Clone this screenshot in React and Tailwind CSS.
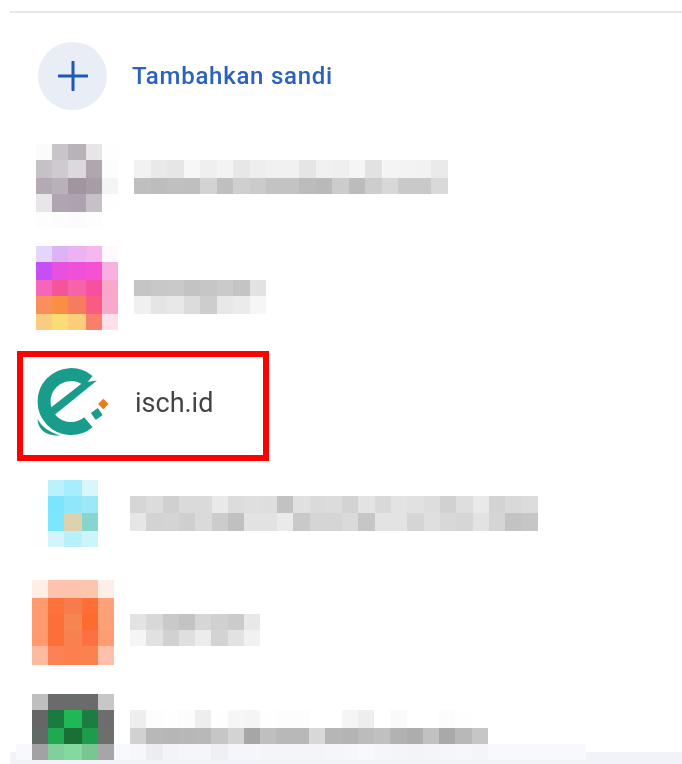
import React from "react";

// blurred-out avatars and labels, one colour per cell
const avatarXs = [0, 16, 32, 50, 66, 82];

const hex = (c) => (c.length === 2 ? `#${c}${c}${c}` : `#${c}`);

function Mosaic({ xs, ys, rows }) {
  const width = xs[xs.length - 1];
  const height = ys[ys.length - 1];
  return (
    <svg width={width} height={height} viewBox={`0 0 ${width} ${height}`} shapeRendering="crispEdges" className="block shrink-0">
      {rows.map((row, r) =>
        row.split(" ").map((c, i) => (
          <rect key={`${r}-${i}`} x={xs[i]} y={ys[r]} width={xs[i + 1] - xs[i]} height={ys[r + 1] - ys[r]} fill={hex(c)} />
        ))
      )}
    </svg>
  );
}

function cellEdges(count, width) {
  return Array.from({ length: count + 1 }, (_, i) => Math.round((i * width) / count));
}

const items = [
  {
    wrap: "mt-[34px] pl-[36px]",
    gap: "gap-[16px]",
    textTop: "mt-[16px]",
    avatarYs: [0, 16, 34, 50, 68, 84],
    avatar: [
      "fbfbfb c9c4c9 b9b2b9 e7e5e7 fefefe",
      "c6c0c7 cfcad0 dcd9de afa6af fcfcfc",
      "b3aab3 b9b1b9 a195a2 a79da6 f4f4f4",
      "e8e6e8 aea5b0 aca3ae c6c1c7 fefefe",
      "fdfdfd fcfcfc fbfbfb fdfdfd ffffff",
    ],
    textWidth: 314,
    textYs: [0, 18, 34],
    text: [
      "f2 e9 e6 f7 ef f3 e7 ee f1 f1 e5 f1 ef f5 e2 f4 f3 f2 ea",
      "bf bd c0 bf d3 bf cf cb c3 c3 bc b9 cc bc cd d8 c9 c9 d9",
    ],
  },
  {
    wrap: "mt-[18px] pl-[36px]",
    gap: "gap-[16px]",
    textTop: "mt-[34px]",
    avatarYs: [0, 16, 34, 50, 68, 84],
    avatar: [
      "e5d5fa dcb3f7 ecb2f3 f6b6f0 fff8fd",
      "c44ff5 e851e0 f04fd8 f651d3 f8b0df",
      "f565bb f45599 f663a8 f8509e f9a8ca",
      "f98e5e f88f45 f67c5e f95b82 f8a8cc",
      "fbcb80 fcdc75 fcce7b fa7f6a fde0ec",
    ],
    textWidth: 132,
    textYs: [0, 16, 34],
    text: ["c5 c8 c9 c3 c6 ca c4 e2", "f0 e5 e8 dc cd e8 eb f6"],
  },
];

const itemsAfter = [
  {
    wrap: "mt-[19px] pl-[32px]",
    gap: "gap-[16px]",
    textTop: "mt-[16px]",
    avatarYs: [0, 16, 33, 51, 67],
    avatar: [
      "ffffff bbf1fd a8edfd d8f7fd ffffff",
      "fcffff 7ae5fc 90e7fa 9ce8f8 ffffff",
      "fdffff 7ce6fc dcd3ae 88d5d0 ffffff",
      "fefefe d2f4fa b8f0fc ccf5fb ffffff",
    ],
    textWidth: 408,
    textYs: [0, 17, 35],
    text: [
      "d6 dc d0 da da e9 dc df de c2 e0 da dc d3 e3 d9 e3 e1 dd d1 de e9 d3 d9 dc",
      "e6 d3 d4 cf da cc c0 e2 e2 ea c9 d5 d5 da c6 e3 e3 d5 df d8 d6 e2 d5 c3 c6",
    ],
  },
  {
    wrap: "mt-[33px] pl-[32px]",
    gap: "gap-[16px]",
    textTop: "mt-[34px]",
    avatarYs: [0, 18, 34, 50, 66, 85],
    avatar: [
      "feeee6 fdc3ae fdc3ad fcc6ae fdeee7",
      "fe9a6d fd713a f87c4b fd6e38 fea178",
      "fe9a6d fb7038 f58551 fd6b2f fea077",
      "fe9a6d fb703a f8824f fc7041 fe9d73",
      "feba9f fc8154 fc7f50 fb814f fec0a8",
    ],
    textWidth: 130,
    textYs: [0, 16, 32],
    text: ["e3 d8 c9 c3 d6 d0 cb e8", "f5 e1 d1 df ec d3 e2 f1"],
  },
  {
    wrap: "relative z-10 mt-[29px] pl-[32px]",
    gap: "gap-[16px]",
    textTop: "mt-[16px]",
    avatarYs: [0, 16, 34, 50, 66],
    avatar: [
      "bfbfbf 6b6b6b 686c6a 6b6b6b c7c7c7",
      "666666 1a7a40 20b757 1b7d42 6d6d6d",
      "5f6b64 1fa950 1a6f36 1f9b4c 6b706c",
      "a2a2a5 80cf9c 82da9f 7ac693 a6a6a8",
    ],
    textWidth: 358,
    textYs: [0, 18, 34, 50],
    text: [
      "ee fd fe fc ee fe f6 f5 fe fd fd ff ff f5 ee ff fa ff ff fc fe ff",
      "d1 b8 b6 b7 b8 c6 d3 a6 bf b8 b8 d8 b6 b4 bc c0 b2 ad c1 a9 b8 c6",
      "f6f7fa ecedf0 f3f4f8 f5f6fa f5f6fa eff0f3 f5f6fb f5f6fb f4f5f9 f4f5f9 f4f5f9 f4f5f9 f5f6f9 f6f7fa f8f9fc f5f6fa f4f5f8 f3f4f8 f4f5f8 f5f6fa f6f7fa f4f5f9",
    ],
  },
];

function BlurredRow({ item }) {
  const cells = item.text[0].split(" ").length;
  return (
    <div className={`flex items-start ${item.wrap} ${item.gap}`}>
      <Mosaic xs={avatarXs} ys={item.avatarYs} rows={item.avatar} />
      <div className={item.textTop}>
        <Mosaic xs={cellEdges(cells, item.textWidth)} ys={item.textYs} rows={item.text} />
      </div>
    </div>
  );
}

function IschLogo() {
  return (
    <svg width="80" height="76" viewBox="0 0 80 76" className="block shrink-0 blur-[0.4px]">
      <path d="M52.4 15.9 A27 27 0 1 0 52.4 57.3" fill="none" stroke="#1a9c8c" strokeWidth="13" />
      <path d="M13 44 L47 17.5 L61 15.5 L19 49.5Z" fill="#1a9c8c" />
      <path d="M1.5 54 C6 62 13 67 24 70.5 C12 71.5 2 66 1.5 54Z" fill="#1a9c8c" />
      <rect x="56.5" y="44.8" width="8.5" height="8.5" transform="rotate(-35 60.7 49)" fill="#1a9c8c" />
      <rect x="63.6" y="35.3" width="7.4" height="7.4" transform="rotate(45 67.3 39)" fill="#ee7a1f" />
    </svg>
  );
}

export default function App() {
  return (
    <div className="relative h-[764px] w-[682px] overflow-hidden bg-white font-['Roboto',sans-serif]">
      <div className="ml-[10px] mt-[11px] h-[2px] bg-[#e8e8e8]" />

      <div className="ml-[38px] mt-[29px] flex items-center gap-[25px]">
        <div className="flex h-[68px] w-[69px] items-center justify-center rounded-full bg-[#e9edf5]">
          <svg width="30" height="30" viewBox="0 0 30 30" className="blur-[0.3px]">
            <path d="M15 1v28M1 15h28" stroke="#1c58b6" strokeWidth="3" strokeLinecap="round" fill="none" />
          </svg>
        </div>
        <span className="text-[24px] font-medium tracking-[0.75px] text-[#2a62bd] blur-[0.3px]">Tambahkan sandi</span>
      </div>

      {items.map((item, i) => (
        <BlurredRow key={i} item={item} />
      ))}

      <div className="ml-[17px] mt-[21px] flex h-[110px] w-[252px] items-center gap-[19px] border-[6px] border-[#ff0000] pb-[6px] pl-[13px]">
        <IschLogo />
        <span className="text-[27px] text-[#444444] blur-[0.3px]">isch.id</span>
      </div>

      {itemsAfter.map((item, i) => (
        <BlurredRow key={i} item={item} />
      ))}

      {/* bottom sheet peeking in under the last row */}
      <div className="absolute bottom-0 left-[10px] right-0 h-[12px] bg-[#f1f3f9]" />
      <div className="absolute bottom-[4px] left-[16px] h-[16px] w-[570px] bg-[#f8f9fd]" />
    </div>
  );
}
